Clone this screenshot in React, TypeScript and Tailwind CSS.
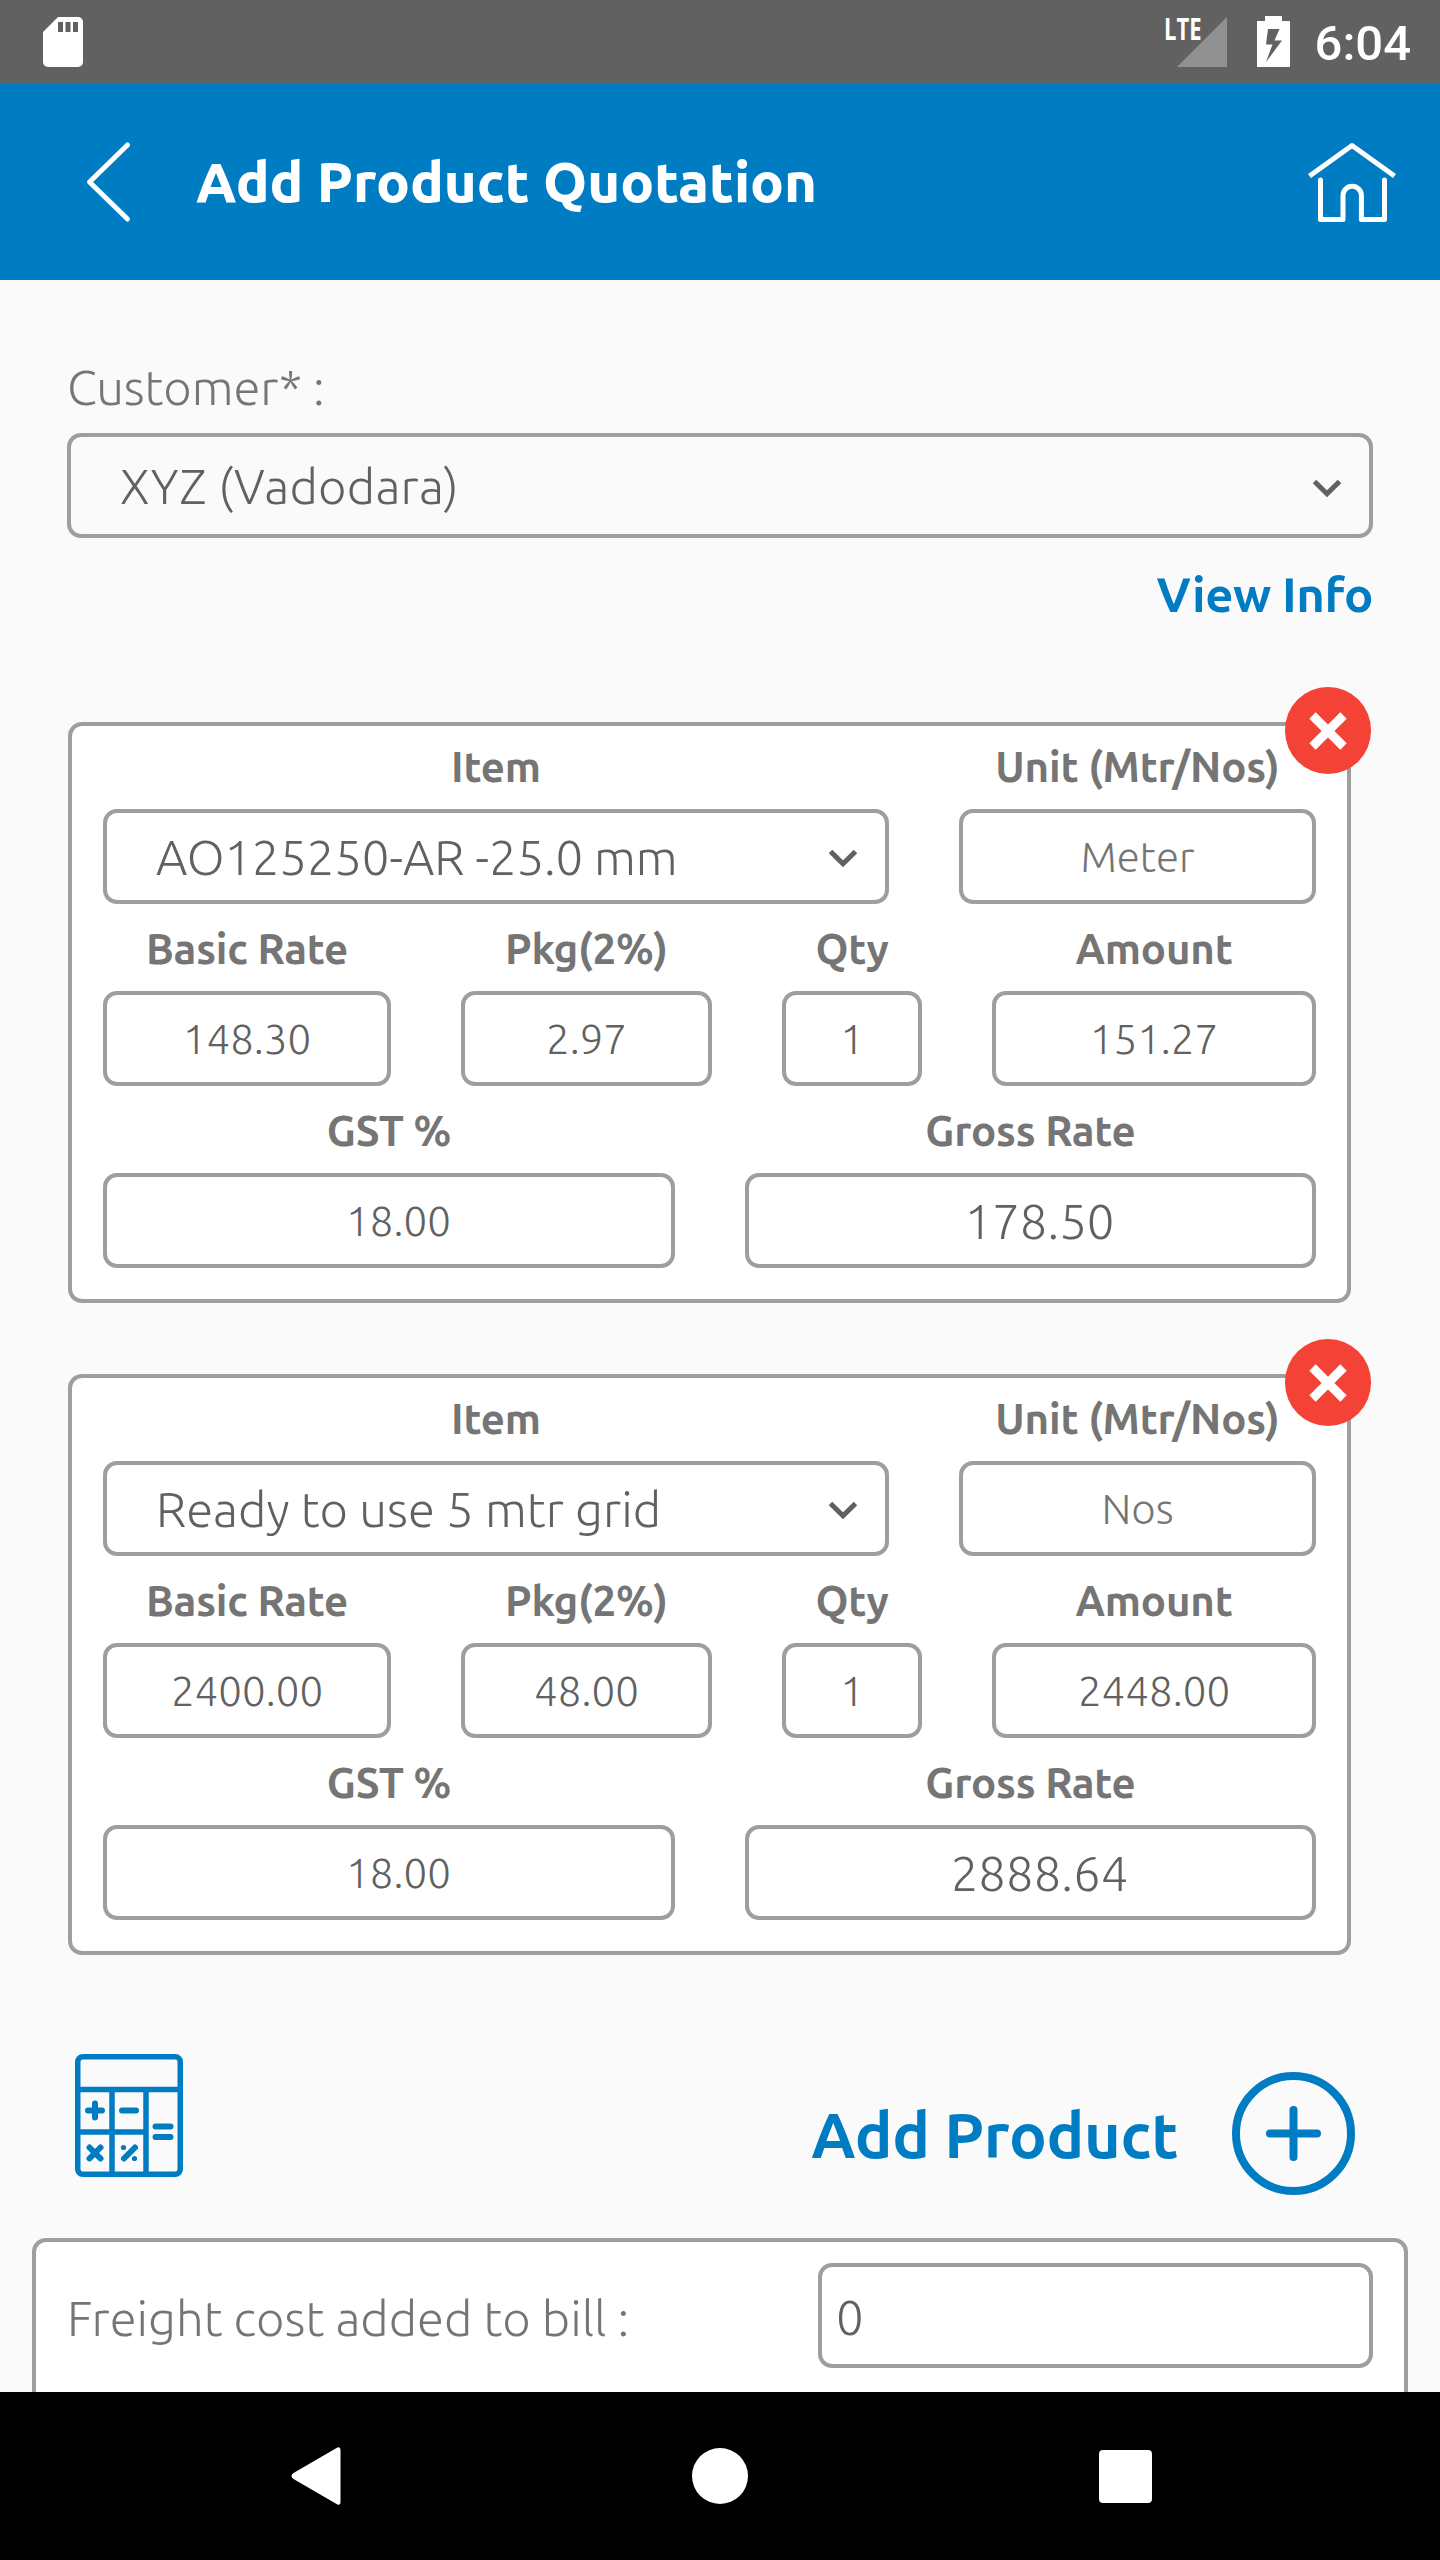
import type { ReactNode } from "react";

type Product = {
  item: string;
  itemClass: string;
  unit: string;
  basicRate: string;
  pkg: string;
  qty: string;
  amount: string;
  gst: string;
  grossRate: string;
};

const products: Product[] = [
  {
    item: "AO125250-AR -25.0 mm",
    itemClass: "tracking-[-0.15px]",
    unit: "Meter",
    basicRate: "148.30",
    pkg: "2.97",
    qty: "1",
    amount: "151.27",
    gst: "18.00",
    grossRate: "178.50",
  },
  {
    item: "Ready to use 5 mtr grid",
    itemClass: "tracking-[0.05px]",
    unit: "Nos",
    basicRate: "2400.00",
    pkg: "48.00",
    qty: "1",
    amount: "2448.00",
    gst: "18.00",
    grossRate: "2888.64",
  },
];

function StatusBar() {
  return (
    <div className="flex h-[84px] items-start bg-[#616161] pt-4 pr-[29px] pl-[43px] text-white">
      <svg className="mt-px h-[50px] w-10" viewBox="0 0 40 50" fill="currentColor">
        <path
          fillRule="evenodd"
          d="M15 0H35a5 5 0 0 1 5 5V45a5 5 0 0 1-5 5H5a5 5 0 0 1-5-5V15ZM15 5v10h5V5Zm7.5 0v10h5V5Zm7.500 0v10h5V5Z"
        />
      </svg>
      <div className="flex-1" />
      <span className="mt-px mr-[-18px] w-[31px] origin-left scale-x-[0.71] font-['Open_Sans','Noto_Sans',sans-serif] text-[31px] leading-[23px] font-bold">
        LTE
      </span>
      <svg className="mt-px h-[50px] w-[50px]" viewBox="0 0 50 50">
        <path d="M50 0V50H0Z" fill="#919191" />
      </svg>
      <svg className="ml-[30px] h-[51px] w-[33px]" viewBox="0 0 33 51" fill="currentColor">
        <path fillRule="evenodd" d="M8 0H25V5H33V51H0V5H8ZM11 13 9 28.500H15.500L9 46 25 24.500H17.500L22.500 13Z" />
      </svg>
      <span className="ml-[25px] font-['Roboto',sans-serif] text-[49px] leading-[56px] font-medium">6:04</span>
    </div>
  );
}

function Header() {
  return (
    <header className="flex h-[196px] items-center bg-[#007cc3] pr-[43px] pl-[85px] text-white">
      <svg className="h-[82px] w-[50px]" viewBox="0 0 50 82" fill="none" stroke="currentColor">
        <path d="M42.500 4 4.500 41 42.500 78" strokeWidth="5" strokeLinecap="round" strokeLinejoin="round" />
      </svg>
      <h1 className="ml-[61px] flex-1 text-[56px] leading-[64px] font-extrabold">Add Product Quotation</h1>
      <svg className="h-[82px] w-[90px]" viewBox="0 0 90 82" fill="none" stroke="currentColor" strokeWidth="5">
        <path d="M2.500 35 45 4.500 87.500 35" strokeLinejoin="round" />
        <path
          d="M13.500 39V78.500H36V54.500a9.200 9.200 0 0 1 18.400 0V78.500H77.500V39"
          strokeLinecap="round"
          strokeLinejoin="round"
        />
      </svg>
    </header>
  );
}

function Chevron() {
  return (
    <svg className="h-[19px] w-[30px]" viewBox="0 0 30 19" fill="none" stroke="#616161">
      <path d="M2.500 2.500 15 14.800 27.500 2.500" strokeWidth="5" />
    </svg>
  );
}

function Field({ label, className, children }: { label: string; className: string; children: ReactNode }) {
  return (
    <div className={className}>
      <div className="mt-[19px] mb-[17px] text-center text-[42px] leading-[51px] font-semibold tracking-[-0.18px] whitespace-nowrap text-[#757575]">
        {label}
      </div>
      <div className="flex h-[95px] items-center rounded-[14px] border-4 border-[#9e9e9e] whitespace-nowrap text-[#616161]">
        {children}
      </div>
    </div>
  );
}

function ProductCard({ product }: { product: Product }) {
  const small = "w-full text-center text-[42px] font-light";
  return (
    <section className="relative w-[1283px]">
      <div className="rounded-[14px] border-4 border-[#9e9e9e] bg-white px-[31px] pb-[31px]">
        <div className="-mt-1 flex gap-[70px]">
          <Field label="Item" className="w-[786px]">
            <span className={`flex-1 pl-[49px] text-[49px] font-light ${product.itemClass}`}>{product.item}</span>
            <span className="mt-[4px] mr-[27px]">
              <Chevron />
            </span>
          </Field>
          <Field label="Unit (Mtr/Nos)" className="w-[357px]">
            <span className="w-full text-center text-[42px] font-light text-[#757575]">{product.unit}</span>
          </Field>
        </div>
        <div className="flex gap-[70px]">
          <Field label="Basic Rate" className="w-[288px]">
            <span className={small}>{product.basicRate}</span>
          </Field>
          <Field label="Pkg(2%)" className="w-[251px]">
            <span className={small}>{product.pkg}</span>
          </Field>
          <Field label="Qty" className="w-[140px]">
            <span className={small}>{product.qty}</span>
          </Field>
          <Field label="Amount" className="w-[324px]">
            <span className={small}>{product.amount}</span>
          </Field>
        </div>
        <div className="flex gap-[70px]">
          <Field label="GST %" className="w-[572px]">
            <span className="w-full pl-[19px] text-center text-[42px] font-light">{product.gst}</span>
          </Field>
          <Field label="Gross Rate" className="w-[571px]">
            <span className="w-full pl-[18px] text-center text-[49px] font-light">{product.grossRate}</span>
          </Field>
        </div>
      </div>
      <div className="absolute top-[-35px] right-[-20px] flex h-[87px] w-[86px] items-center justify-center rounded-full bg-[#f44336]">
        <svg className="h-10 w-10" viewBox="0 0 40 40" stroke="#fff" strokeWidth="9">
          <path d="M4.500 4.500 35.500 35.500M35.500 4.500 4.500 35.500" />
        </svg>
      </div>
    </section>
  );
}

function CalculatorIcon() {
  return (
    <svg className="h-[123px] w-[108px]" viewBox="0 0 108 123" fill="none" stroke="#007cc3" strokeWidth="5.500">
      <rect x="2.750" y="2.750" width="102.500" height="117.500" rx="5" />
      <path d="M3 35.500H105M3 78H71M37 35.500V120M71 35.500V120" />
      <path
        d="M13 56.500H27M20 49.500V63.500M47 56.500H61M80.500 72.500H95.500M80.500 83H95.500M14.500 93.500 25.500 104.500M25.500 93.500 14.500 104.500M49 104.500 60 93.500"
        strokeWidth="6"
        strokeLinecap="round"
      />
      <g fill="#007cc3" stroke="none">
        <circle cx="48.500" cy="93.500" r="2.600" />
        <circle cx="59.500" cy="104.500" r="2.600" />
      </g>
    </svg>
  );
}

function NavBar() {
  return (
    <nav className="flex h-[168px] items-center bg-black pr-[288px] pl-[291px] text-white">
      <svg className="h-[58px] w-[50px]" viewBox="0 0 50 58" fill="currentColor">
        <path d="M46 .8Q49.500-.8 49.500 3V55Q49.500 59 46 57.200L2.500 32Q-1.500 29 2.500 26Z" />
      </svg>
      <div className="ml-[351px] h-14 w-14 rounded-full bg-white" />
      <div className="flex-1" />
      <div className="h-[53px] w-[53px] rounded-[4px] bg-white" />
    </nav>
  );
}

export default function App() {
  return (
    <div className="flex h-[2560px] w-[1440px] flex-col overflow-hidden bg-[#fafafa] font-['Ubuntu','Noto_Sans',sans-serif]">
      <StatusBar />
      <Header />
      <main className="h-[2112px] overflow-hidden pt-[79px]">
        <div className="px-[67px]">
          <div className="text-[49px] leading-[56px] tracking-[-0.1px] font-light text-[#757575]">Customer* :</div>
          <div className="mt-[18px] flex h-[105px] items-center justify-between rounded-[14px] border-4 border-[#9e9e9e] pr-[27px] pl-[49px] text-[49px] tracking-[0.25px] font-light text-[#616161]">
            XYZ (Vadodara)
            <span className="mt-[5px]">
              <Chevron />
            </span>
          </div>
          <div className="mt-7 text-right text-[49px] leading-[56px] font-semibold tracking-[-0.45px] text-[#007cc3]">
            View Info
          </div>
        </div>
        <div className="mt-[100px] ml-[68px] flex flex-col gap-[71px]">
          {products.map((product) => (
            <ProductCard key={product.item} product={product} />
          ))}
        </div>
        <div className="mt-[99px] flex items-start justify-between pr-[85px] pl-[75px]">
          <CalculatorIcon />
          <div className="mt-[18px] flex items-center gap-[54px]">
            <span className="mt-0.5 text-[63px] leading-[72px] font-semibold tracking-[-0.3px] text-[#007cc3]">
              Add Product
            </span>
            <svg className="h-[123px] w-[123px]" viewBox="0 0 123 123" fill="none" stroke="#007cc3" strokeWidth="8">
              <circle cx="61.500" cy="61.500" r="57.500" />
              <path d="M38 61.500H85M61.500 38V85" strokeLinecap="round" />
            </svg>
          </div>
        </div>
        <div className="mx-8 mt-[43px] flex h-[260px] items-start justify-between rounded-[14px] border-4 border-[#9e9e9e] bg-white pt-[21px] pr-[31px] pl-[31px] text-[49px] font-light">
          <span className="mt-0.5 leading-[105px] text-[#757575]">Freight cost added to bill :</span>
          <div className="flex h-[105px] w-[555px] items-center rounded-[14px] border-4 border-[#9e9e9e] pt-[2px] pl-[14px] text-[#616161]">
            0
          </div>
        </div>
      </main>
      <NavBar />
    </div>
  );
}
